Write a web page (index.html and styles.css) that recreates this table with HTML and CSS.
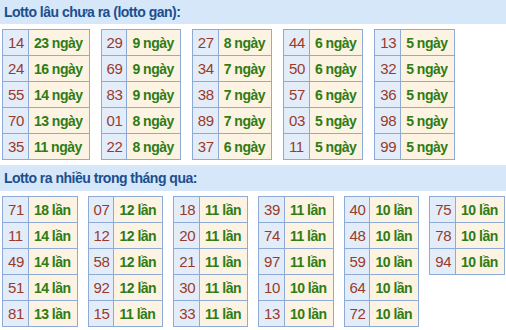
FILE: index.html
```html
<!DOCTYPE html>
<html lang="vi">
<head>
<meta charset="utf-8">
<link rel="stylesheet" href="styles.css">
</head>
<body>
<div class="page">
  <div class="title">Lotto lâu chưa ra (lotto gan):</div>
  <div class="group gan">
    <table class="lt"><tr><td class="n">14</td><td class="v">23 ngày</td></tr><tr><td class="n">24</td><td class="v">16 ngày</td></tr><tr><td class="n">55</td><td class="v">14 ngày</td></tr><tr><td class="n">70</td><td class="v">13 ngày</td></tr><tr><td class="n">35</td><td class="v">11 ngày</td></tr></table>
    <table class="lt"><tr><td class="n">29</td><td class="v">9 ngày</td></tr><tr><td class="n">69</td><td class="v">9 ngày</td></tr><tr><td class="n">83</td><td class="v">9 ngày</td></tr><tr><td class="n">01</td><td class="v">8 ngày</td></tr><tr><td class="n">22</td><td class="v">8 ngày</td></tr></table>
    <table class="lt"><tr><td class="n">27</td><td class="v">8 ngày</td></tr><tr><td class="n">34</td><td class="v">7 ngày</td></tr><tr><td class="n">38</td><td class="v">7 ngày</td></tr><tr><td class="n">89</td><td class="v">7 ngày</td></tr><tr><td class="n">37</td><td class="v">6 ngày</td></tr></table>
    <table class="lt"><tr><td class="n">44</td><td class="v">6 ngày</td></tr><tr><td class="n">50</td><td class="v">6 ngày</td></tr><tr><td class="n">57</td><td class="v">6 ngày</td></tr><tr><td class="n">03</td><td class="v">5 ngày</td></tr><tr><td class="n">11</td><td class="v">5 ngày</td></tr></table>
    <table class="lt"><tr><td class="n">13</td><td class="v">5 ngày</td></tr><tr><td class="n">32</td><td class="v">5 ngày</td></tr><tr><td class="n">36</td><td class="v">5 ngày</td></tr><tr><td class="n">98</td><td class="v">5 ngày</td></tr><tr><td class="n">99</td><td class="v">5 ngày</td></tr></table>
  </div>
  <div class="title">Lotto ra nhiều trong tháng qua:</div>
  <div class="group nhieu">
    <table class="lt"><tr><td class="n">71</td><td class="v">18 lần</td></tr><tr><td class="n">11</td><td class="v">14 lần</td></tr><tr><td class="n">49</td><td class="v">14 lần</td></tr><tr><td class="n">51</td><td class="v">14 lần</td></tr><tr><td class="n">81</td><td class="v">13 lần</td></tr></table>
    <table class="lt"><tr><td class="n">07</td><td class="v">12 lần</td></tr><tr><td class="n">12</td><td class="v">12 lần</td></tr><tr><td class="n">58</td><td class="v">12 lần</td></tr><tr><td class="n">92</td><td class="v">12 lần</td></tr><tr><td class="n">15</td><td class="v">11 lần</td></tr></table>
    <table class="lt"><tr><td class="n">18</td><td class="v">11 lần</td></tr><tr><td class="n">20</td><td class="v">11 lần</td></tr><tr><td class="n">21</td><td class="v">11 lần</td></tr><tr><td class="n">30</td><td class="v">11 lần</td></tr><tr><td class="n">33</td><td class="v">11 lần</td></tr></table>
    <table class="lt"><tr><td class="n">39</td><td class="v">11 lần</td></tr><tr><td class="n">74</td><td class="v">11 lần</td></tr><tr><td class="n">97</td><td class="v">11 lần</td></tr><tr><td class="n">10</td><td class="v">10 lần</td></tr><tr><td class="n">13</td><td class="v">10 lần</td></tr></table>
    <table class="lt"><tr><td class="n">40</td><td class="v">10 lần</td></tr><tr><td class="n">48</td><td class="v">10 lần</td></tr><tr><td class="n">59</td><td class="v">10 lần</td></tr><tr><td class="n">64</td><td class="v">10 lần</td></tr><tr><td class="n">72</td><td class="v">10 lần</td></tr></table>
    <table class="lt"><tr><td class="n">75</td><td class="v">10 lần</td></tr><tr><td class="n">78</td><td class="v">10 lần</td></tr><tr><td class="n">94</td><td class="v">10 lần</td></tr></table>
  </div>
</div>
</body>
</html>
```

FILE: styles.css
```css
html, body {
  margin: 0;
  padding: 0;
  background: #ffffff;
}
.page {
  width: 506px;
  font-family: "Liberation Sans", Arial, sans-serif;
}
.title {
  background: #d5e7f9;
  color: #1c4f8e;
  font-size: 14px;
  font-weight: bold;
  letter-spacing: -0.5px;
  height: 24px;
  line-height: 24px;
  padding-left: 4px;
}
.group {
  display: flex;
  align-items: flex-start;
  padding: 5px 0 5px 2px;
}
.gan { gap: 11px; }
.nhieu { gap: 10px; padding-bottom: 4px; }
.group + .title { height: 26px; line-height: 26px; }
.lt {
  border-collapse: collapse;
}
.lt td {
  border: 1px solid #8eaad6;
  height: 25px;
  white-space: nowrap;
}
.lt td.n {
  background: #e3edf9;
  color: #9a3a2b;
  font-size: 15px;
  letter-spacing: -0.4px;
  padding: 0 4px 0 5px;
}
.lt td.v {
  background: #fdf3e3;
  color: #2f7c14;
  font-size: 14px;
  font-weight: bold;
  letter-spacing: -0.5px;
  padding: 0 6px 0 5px;
}
```
